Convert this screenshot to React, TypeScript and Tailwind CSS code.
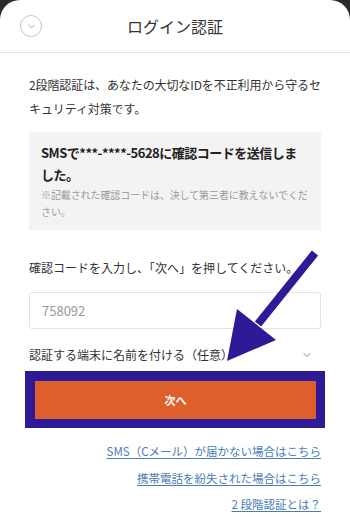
import { ChevronDown } from 'lucide-react'

const FONT = "font-['Noto_Sans_CJK_JP','Noto_Sans',sans-serif]"

function HelpLink({ children }: { children: React.ReactNode }) {
  return (
    <a
      href="#"
      className="text-[11.5px] leading-[26.5px] text-[#4a7db5] underline underline-offset-2 decoration-[#4a7db5]"
    >
      {children}
    </a>
  )
}

export default function App() {
  return (
    <div className={`h-[519px] overflow-hidden bg-[#2b2b2b] ${FONT}`}>
      <div className="relative h-[519px] overflow-hidden rounded-t-[20px] bg-white">
        {/* header */}
        <header className="grid h-[53px] grid-cols-[60px_1fr_60px] items-center border-b border-[#e3e3e3]">
          <div className="pl-[20px]">
            <div className="flex h-[22px] w-[22px] items-center justify-center rounded-full border border-[#c4c4c4]">
              <ChevronDown size={11} strokeWidth={2} className="text-[#a0a0a0]" />
            </div>
          </div>
          <h1 className="text-center text-[16px] leading-none text-[#333]">ログイン認証</h1>
          <div />
        </header>

        <main className="px-[29px]">
          <p className="pt-[20px] text-[12px] leading-[24px] tracking-[-0.1px] text-[#333]">
            2段階認証は、あなたの大切なIDを不正利用から守るセキュリティ対策です。
          </p>

          <div className="mt-[11px] bg-[#f3f3f3] px-[12px] py-[10px]">
            <p className="text-[13px] font-bold leading-[22px] tracking-[-0.5px] text-[#222]">
              SMSで***-****-5628に確認コードを送信しました。
            </p>
            <p className="text-[10px] leading-[17px] tracking-[-0.1px] text-[#9a9a9a]">
              <span className="block whitespace-nowrap">
                ※記載された確認コードは、決して第三者に教えないでくだ
              </span>
              <span className="block">さい。</span>
            </p>
          </div>

          <p className="mt-[26px] text-[12px] leading-[24px] text-[#333]">
            確認コードを入力し、「次へ」を押してください。
          </p>

          <div className="mt-[12px] flex h-[37px] items-center rounded-[3px] border border-[#e3e3e3] px-[12px] text-[13px] text-[#999]">
            758092
          </div>

          <div className="mt-[14px] flex h-[24px] items-center justify-between pr-[8px]">
            <span className="text-[12px] text-[#333]">認証する端末に名前を付ける（任意）</span>
            <ChevronDown size={12} strokeWidth={2} className="text-[#888]" />
          </div>

          <div className="mx-[-4px] mt-[4px] border-[10px] border-[#2d1a96] border-r-[9px] border-b-[9px]">
            <button className="flex h-[38px] w-full items-center justify-center bg-[#de5f2b] text-[11px] font-bold text-white">
              次へ
            </button>
          </div>

          <div className="mt-[10px] flex flex-col items-end">
            <HelpLink>SMS（Cメール）が届かない場合はこちら</HelpLink>
            <HelpLink>携帯電話を紛失された場合はこちら</HelpLink>
            <HelpLink>2 段階認証とは？</HelpLink>
          </div>
        </main>

        {/* annotation arrow */}
        <svg
          className="pointer-events-none absolute inset-0"
          width="350"
          height="519"
          viewBox="0 0 350 519"
        >
          <line x1="315" y1="253" x2="258" y2="324" stroke="#2d1a96" strokeWidth="8" />
          <polygon points="237,309 276,340 227,361" fill="#2d1a96" />
        </svg>
      </div>
    </div>
  )
}
